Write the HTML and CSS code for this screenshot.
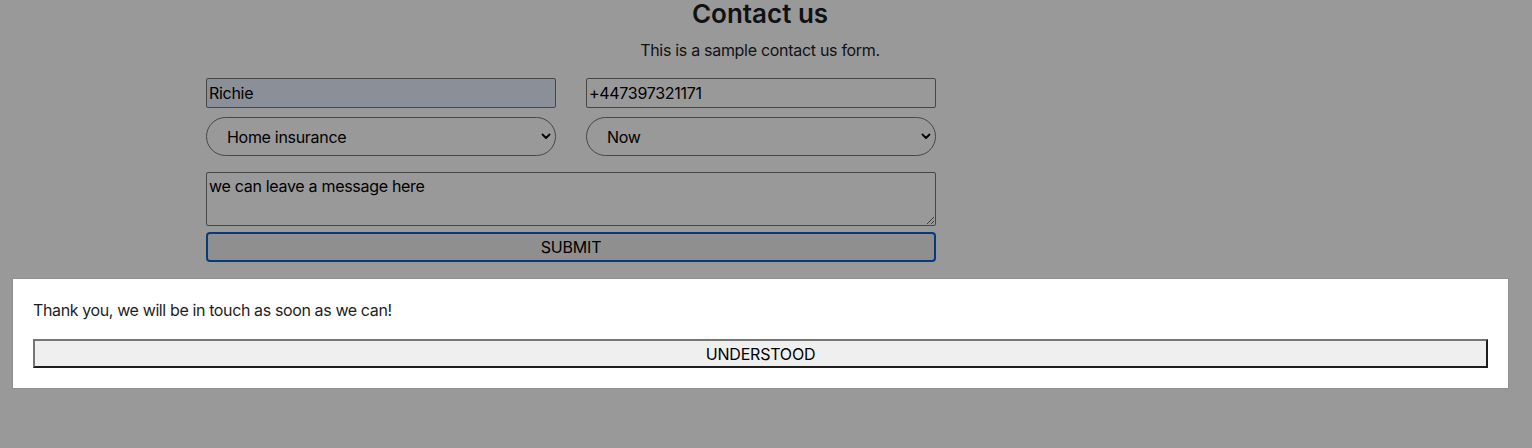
FILE: index.html
```
<!DOCTYPE html>
<html lang="en">
<head>
<meta charset="utf-8">
<title>Contact us</title>
<link rel="stylesheet" href="styles.css">
</head>
<body>
<main class="page">
  <h1 class="title">Contact us</h1>
  <p class="intro">This is a sample contact us form.</p>
  <form class="form">
    <div class="row">
      <input class="field autofilled" type="text" value="Richie">
      <input class="field" type="tel" value="+447397321171">
    </div>
    <div class="row row-selects">
      <div class="select-wrap">
        <select class="select"><option>Home insurance</option></select>
        <svg class="chev" width="10" height="7" viewBox="0 0 10 7"><path d="M1.5 1.5 L5 5 L8.5 1.5" fill="none" stroke="#000" stroke-width="1.8" stroke-linecap="round" stroke-linejoin="round"/></svg>
      </div>
      <div class="select-wrap">
        <select class="select"><option>Now</option></select>
        <svg class="chev" width="10" height="7" viewBox="0 0 10 7"><path d="M1.5 1.5 L5 5 L8.5 1.5" fill="none" stroke="#000" stroke-width="1.8" stroke-linecap="round" stroke-linejoin="round"/></svg>
      </div>
    </div>
    <textarea class="message">we can leave a message here</textarea>
    <button class="submit" type="button">SUBMIT</button>
  </form>
</main>
<div class="backdrop"></div>
<div class="dialog" role="dialog">
  <p class="dialog-text">Thank you, we will be in touch as soon as we can!</p>
  <button class="dialog-btn" type="button">UNDERSTOOD</button>
</div>
</body>
</html>
```
FILE: styles.css
```
* { box-sizing: border-box; }
html, body {
  margin: 0;
  padding: 0;
  background: #ffffff;
  font-family: Inter, "Liberation Sans", sans-serif;
  color: #1d1d1f;
  overflow: hidden;
}
.page {
  width: 1520px;
  text-align: center;
}
.title {
  margin: -2px 0 0;
  font-size: 26px;
  line-height: 32px;
  font-weight: 600;
}
.intro {
  margin: 11px 0 0;
  font-size: 16px;
  line-height: 19px;
  letter-spacing: -0.3px;
}
.form {
  margin: 18px 0 0 206px;
  width: 730px;
  display: flex;
  flex-direction: column;
  text-align: left;
}
.row {
  display: flex;
  gap: 30px;
}
.row-selects { margin-top: 9px; }
.field {
  width: 350px;
  height: 30px;
  border: 1px solid #767676;
  border-radius: 2px;
  padding: 0 2px;
  font: 16px Inter, "Liberation Sans", sans-serif;
  letter-spacing: -0.3px;
  color: #000;
  background: #fff;
  outline: none;
}
.field.autofilled { background: #e8f0fe; }
.select-wrap {
  position: relative;
  width: 350px;
  height: 39px;
}
.select {
  appearance: none;
  -webkit-appearance: none;
  width: 100%;
  height: 100%;
  border: 1px solid #767676;
  border-radius: 20px;
  background: #fff;
  padding: 0 20px;
  font: 16px Inter, "Liberation Sans", sans-serif;
  letter-spacing: -0.3px;
  color: #000;
}
.chev {
  position: absolute;
  right: 5px;
  top: 16px;
  pointer-events: none;
}
.message {
  margin-top: 16px;
  width: 730px;
  height: 54px;
  border: 1px solid #767676;
  border-radius: 2px;
  padding: 3px 2px;
  font: 16px Inter, "Liberation Sans", sans-serif;
  letter-spacing: -0.3px;
  color: #000;
  background: #fff;
  resize: vertical;
}
.submit {
  margin-top: 6px;
  width: 730px;
  height: 30px;
  border: 2px solid #0a62d0;
  border-radius: 4px;
  background: #efefef;
  font: 16px Inter, "Liberation Sans", sans-serif;
  letter-spacing: -0.2px;
  color: #000;
}
.backdrop {
  position: fixed;
  inset: 0;
  background: rgba(0, 0, 0, 0.4);
}
.dialog {
  position: absolute;
  top: 278px;
  left: 12px;
  width: 1497px;
  background: #fff;
  border: 1px solid #8f8f8f;
  padding: 20px;
}
.dialog-text {
  margin: 0 0 18px;
  font-size: 16px;
  line-height: 22px;
  letter-spacing: -0.38px;
  color: #1d1d1f;
}
.dialog-btn {
  display: block;
  width: 100%;
  height: 29px;
  background: #efefef;
  border: 2px solid;
  border-color: #767676 #1e1e1e #1e1e1e #767676;
  font: 16px Inter, "Liberation Sans", sans-serif;
  letter-spacing: -0.2px;
  color: #000;
  padding: 0;
}
```
